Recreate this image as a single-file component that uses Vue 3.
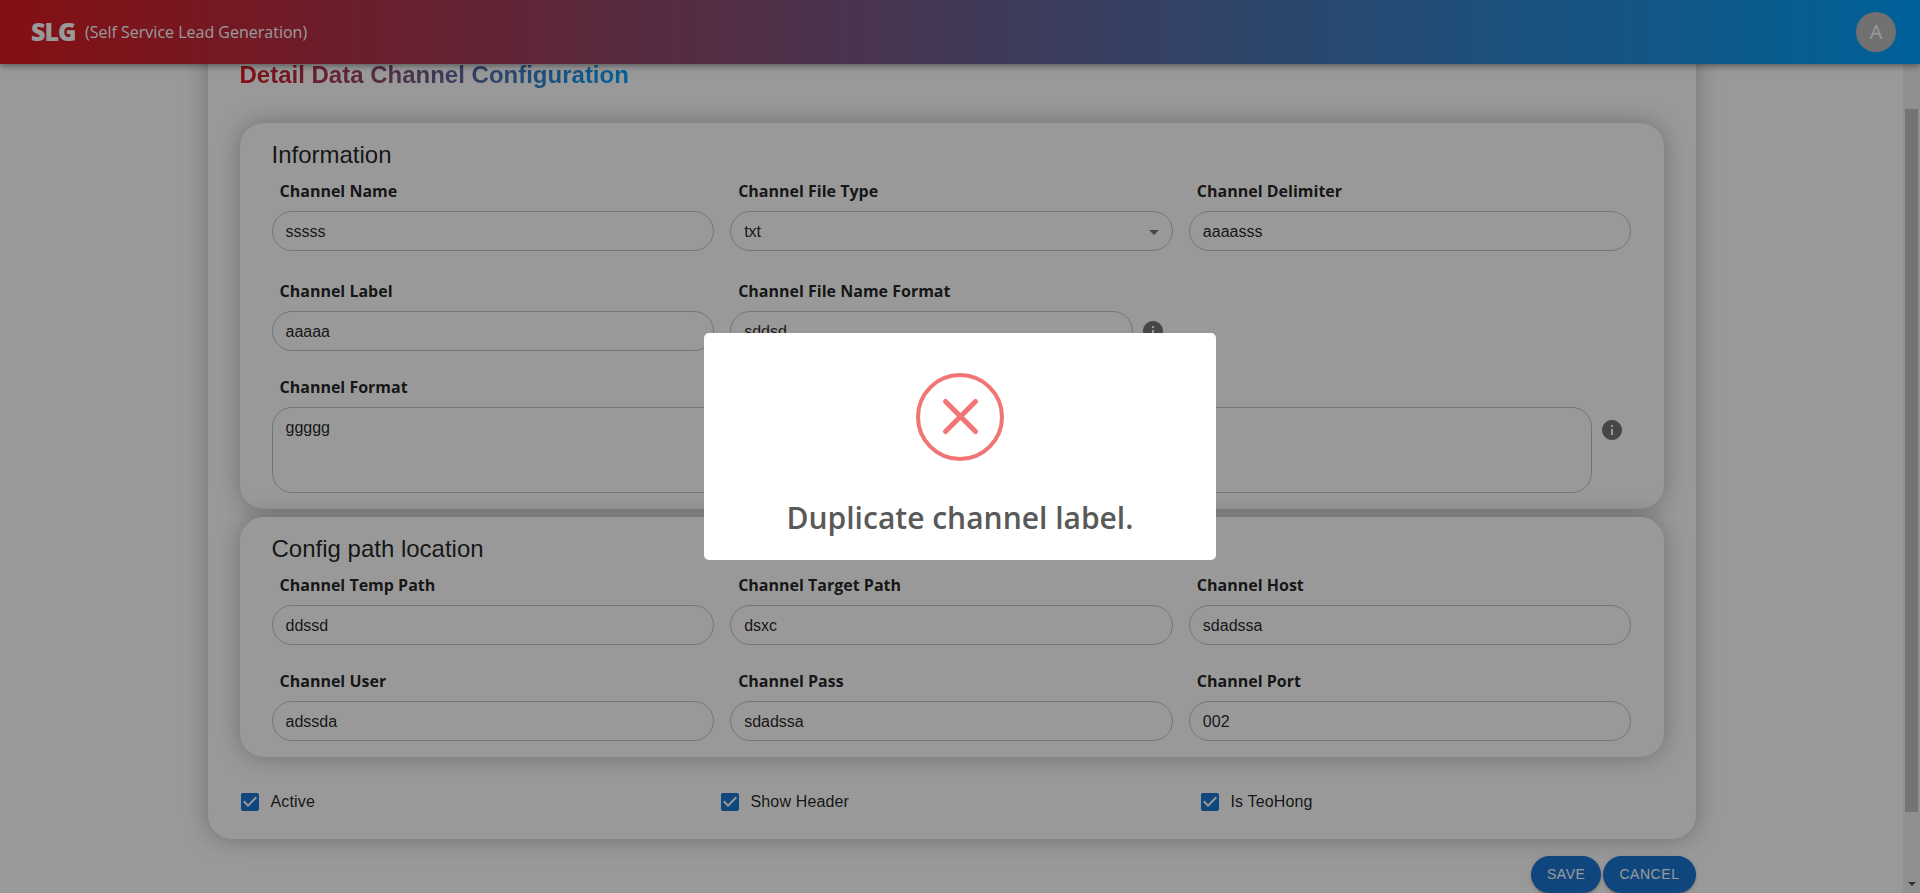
<script setup>
const info = [
  { label: 'Channel Name', value: 'sssss' },
  { label: 'Channel File Type', value: 'txt', kind: 'select' },
  { label: 'Channel Delimiter', value: 'aaaasss' },
  { label: 'Channel Label', value: 'aaaaa' },
  { label: 'Channel File Name Format', value: 'sddsd', kind: 'info' },
]
const paths = [
  { label: 'Channel Temp Path', value: 'ddssd' },
  { label: 'Channel Target Path', value: 'dsxc' },
  { label: 'Channel Host', value: 'sdadssa' },
  { label: 'Channel User', value: 'adssda' },
  { label: 'Channel Pass', value: 'sdadssa' },
  { label: 'Channel Port', value: '002' },
]
const checks = ['Active', 'Show Header', 'Is TeoHong']
const infoPath = 'M12 2C6.48 2 2 6.48 2 12s4.48 10 10 10 10-4.48 10-10S17.52 2 12 2zm1 15h-2v-6h2v6zm0-8h-2V7h2v2z'
</script>

<template>
  <div class="app">
    <header class="bar">
      <span class="logo">SLG</span>
      <span class="tagline">(Self Service Lead Generation)</span>
      <span class="avatar">A</span>
    </header>

    <div class="body">
      <main class="content">
        <div class="card">
          <h1 class="title">Detail Data Channel Configuration</h1>

          <section class="panel first">
            <h2>Information</h2>
            <div class="grid info-grid">
              <div v-for="f in info" :key="f.label" class="field">
                <label>{{ f.label }}</label>
                <div class="line">
                  <div class="input">
                    <span>{{ f.value }}</span>
                    <svg v-if="f.kind === 'select'" class="caret" viewBox="0 0 24 24"><path d="M7 10l5 5 5-5z" /></svg>
                  </div>
                  <svg v-if="f.kind === 'info'" class="info" viewBox="0 0 24 24"><path :d="infoPath" /></svg>
                </div>
              </div>
            </div>
            <div class="field">
              <label>Channel Format</label>
              <div class="line">
                <div class="input area"><span>ggggg</span></div>
                <svg class="info top" viewBox="0 0 24 24"><path :d="infoPath" /></svg>
              </div>
            </div>
          </section>

          <section class="panel">
            <h2>Config path location</h2>
            <div class="grid">
              <div v-for="f in paths" :key="f.label" class="field">
                <label>{{ f.label }}</label>
                <div class="line"><div class="input"><span>{{ f.value }}</span></div></div>
              </div>
            </div>
          </section>

          <div class="checks">
            <div v-for="c in checks" :key="c" class="check">
              <svg viewBox="0 0 24 24">
                <path d="M19 3H5c-1.11 0-2 .9-2 2v14c0 1.1.89 2 2 2h14c1.11 0 2-.9 2-2V5c0-1.1-.89-2-2-2zm-9 14l-5-5 1.41-1.41L10 14.17l7.59-7.59L19 8l-9 9z" />
              </svg>
              <span>{{ c }}</span>
            </div>
          </div>
        </div>

        <div class="actions">
          <button type="button">SAVE</button>
          <button type="button">CANCEL</button>
        </div>
      </main>

      <div class="scrollbar">
        <div class="thumb"></div>
        <svg class="arrow" viewBox="0 0 8 4"><path d="M0 0h8L4 4z" /></svg>
      </div>
    </div>

    <div class="overlay">
      <div class="dialog">
        <svg class="error" viewBox="0 0 88 88">
          <circle cx="44" cy="44" r="42" />
          <path d="M29.5 28.5l30 30M59.5 28.5l-30 30" />
        </svg>
        <div class="message">Duplicate channel label.</div>
      </div>
    </div>
  </div>
</template>

<style>
html,
body {
  margin: 0;
  overflow: hidden;
}
</style>

<style scoped>
* {
  box-sizing: border-box;
}
.app {
  position: relative;
  height: 893px;
  overflow: hidden;
  display: flex;
  flex-direction: column;
  background: #fff;
  color: rgba(0, 0, 0, 0.87);
  font-family: "Liberation Sans", Arial, sans-serif;
  font-size: 16px;
}
.bar {
  position: relative;
  z-index: 2;
  flex: none;
  height: 64px;
  padding: 0 24px 0 31px;
  display: flex;
  align-items: center;
  color: #fff;
  font-family: "Open Sans", sans-serif;
  background: linear-gradient(90deg, #dc1a21, #00a3ff);
  box-shadow: 0 2px 4px -1px rgba(0, 0, 0, 0.2), 0 4px 5px rgba(0, 0, 0, 0.14), 0 1px 10px rgba(0, 0, 0, 0.12);
}
.logo {
  width: 54px;
  font-size: 25px;
  line-height: 34px;
  margin-top: -2px;
  font-weight: 800;
  letter-spacing: -1px;
}
.tagline {
  font-size: 16px;
}
.avatar {
  width: 40px;
  height: 40px;
  margin-left: auto;
  border-radius: 50%;
  background: #bdbdbd;
  font-size: 20px;
  line-height: 40px;
  text-align: center;
}
.body {
  flex: 1;
  min-height: 0;
  display: flex;
}
.content {
  flex: 1;
  min-width: 0;
  padding: 0 207.5px;
}
.card {
  height: 807px;
  margin-top: -32px;
  padding: 31px 32px 0;
  border-radius: 24px;
  background: #fff;
  box-shadow: 0 0 24px rgba(0, 0, 0, 0.28);
}
.title {
  width: max-content;
  height: 60px;
  margin: 0;
  font-size: 24px;
  line-height: 24px;
  font-weight: 700;
  color: transparent;
  background: linear-gradient(90deg, #dc1a21, #00a3ff);
  background-clip: text;
  -webkit-background-clip: text;
}
.panel {
  height: 240px;
  padding: 16px 32px;
  border-radius: 24px;
  background: #fff;
  box-shadow: 0 0 24px rgba(0, 0, 0, 0.28);
}
.panel.first {
  height: 386px;
  margin-bottom: 8px;
}
h2 {
  height: 32px;
  margin: 0;
  font-size: 24px;
  line-height: 32px;
  font-weight: 400;
}
.grid {
  display: grid;
  grid-template-columns: repeat(3, 1fr);
  column-gap: 16px;
}
.info-grid {
  row-gap: 4px;
}
.field {
  height: 96px;
}
label {
  display: block;
  height: 40px;
  padding: 8px 8px 0;
  font-family: "Open Sans", sans-serif;
  font-weight: 700;
  line-height: 24px;
}
.line {
  display: flex;
}
.input {
  flex: 1;
  display: flex;
  align-items: center;
  justify-content: space-between;
  height: 40px;
  padding: 1px 6px 0 13px;
  border: 1px solid rgba(0, 0, 0, 0.23);
  border-radius: 20px;
}
.area {
  height: 86px;
  align-items: flex-start;
  padding-top: 11px;
}
svg {
  display: block;
  flex: none;
}
.caret {
  width: 24px;
  height: 24px;
  fill: rgba(0, 0, 0, 0.54);
}
.info {
  width: 24px;
  height: 24px;
  margin: 8px 8px 0;
  fill: rgba(0, 0, 0, 0.54);
}
.info.top {
  margin-top: 11px;
}
.checks {
  display: flex;
  padding-top: 33px;
}
.check {
  flex: none;
  width: 480px;
  margin-left: -1.5px;
  margin-right: 1.5px;
  display: flex;
  align-items: center;
  letter-spacing: 0.15px;
}
.check:last-child {
  width: 440px;
}
.check svg {
  width: 24px;
  height: 24px;
  margin-right: 8.5px;
  fill: #1976d2;
}
.actions {
  display: flex;
  justify-content: flex-end;
  gap: 2px;
  padding-top: 16.5px;
}
button {
  height: 37px;
  padding: 0 16px;
  border: 0;
  border-radius: 18.5px;
  color: #fff;
  background: #1976d2;
  font: 400 14px "Liberation Sans", Arial, sans-serif;
  letter-spacing: 0.55px;
  box-shadow: 0 3px 1px -2px rgba(0, 0, 0, 0.2), 0 2px 2px rgba(0, 0, 0, 0.14), 0 1px 5px rgba(0, 0, 0, 0.12);
}
.scrollbar {
  flex: none;
  width: 17px;
  padding: 45px 2px 7px;
  display: flex;
  flex-direction: column;
  align-items: center;
  justify-content: space-between;
  background: #f1f1f1;
}
.thumb {
  width: 13px;
  height: 703px;
  background: #c1c1c1;
}
.arrow {
  width: 8px;
  height: 4px;
  fill: #505050;
}
.overlay {
  position: absolute;
  inset: 0;
  z-index: 5;
  display: flex;
  justify-content: center;
  align-items: center;
  background: rgba(0, 0, 0, 0.4);
}
.dialog {
  width: 512px;
  height: 227px;
  padding-top: 40px;
  border-radius: 5px;
  background: #fff;
}
.error {
  width: 88px;
  height: 88px;
  margin: 0 auto;
  fill: none;
  stroke: #f27474;
  stroke-width: 4;
}
.error path {
  stroke-width: 5;
  stroke-linecap: round;
}
.message {
  margin-top: 36px;
  color: #595959;
  font-family: "Open Sans", sans-serif;
  font-size: 30px;
  font-weight: 600;
  line-height: 41px;
  text-align: center;
}
</style>
